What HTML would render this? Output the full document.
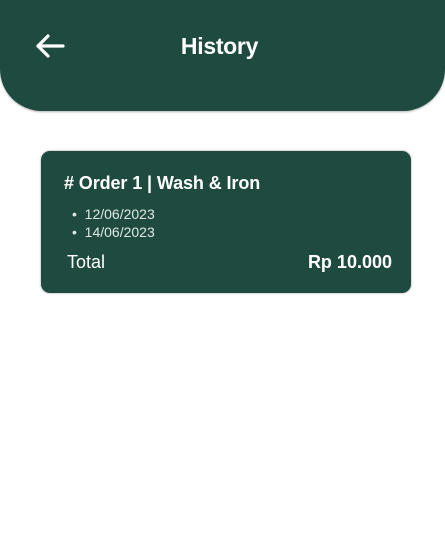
<!DOCTYPE html>
<html><head><style>
html,body{margin:0;padding:0;width:445px;height:547px;background:#fff;overflow:hidden;font-family:"Liberation Sans",sans-serif;}
.hdr{position:absolute;left:0;top:0;width:445px;height:111px;background:#1e4a3f;border-radius:0 0 42px 42px;box-shadow:0 1px 2px rgba(0,0,0,.3);}
.t{position:absolute;left:-3px;width:445px;top:33px;text-align:center;color:#fff;font-weight:bold;font-size:23px;letter-spacing:-0.3px;}
.card{position:absolute;left:41px;top:151px;width:370px;height:142px;background:#1e4a3f;border-radius:9px;box-shadow:0 0 2px rgba(0,0,0,.4);color:#fff;}
.a{position:absolute;white-space:nowrap;}
</style></head><body>
<div class="hdr">
<svg style="position:absolute;left:35px;top:33px" width="30" height="26" viewBox="0 0 30 26"><path d="M28 13H3M13 3L3 13L13 23" fill="none" stroke="#fff" stroke-width="3.2" stroke-linecap="round" stroke-linejoin="round"/></svg>
<div class="t">History</div>
</div>
<div class="card">
<div class="a" style="left:23px;top:22px;font-size:18px;font-weight:bold;letter-spacing:-0.1px">#&nbsp;Order 1 | Wash &amp; Iron</div>
<div class="a" style="left:31px;top:54px;font-size:14px;line-height:18px;color:#dfe8e5">•&nbsp;&nbsp;12/06/2023<br>•&nbsp;&nbsp;14/06/2023</div>
<div class="a" style="left:26px;top:101px;font-size:18px">Total</div>
<div class="a" style="right:19px;top:101px;font-size:18px;font-weight:bold">Rp 10.000</div>
</div>
</body></html>
